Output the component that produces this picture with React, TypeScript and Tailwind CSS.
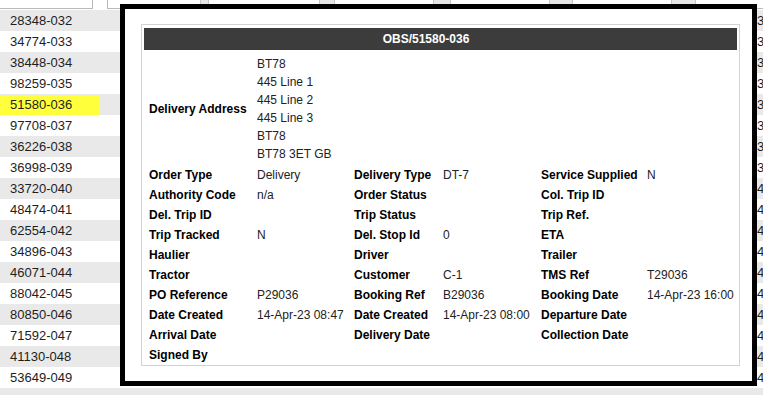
import React from "react"

const ids = [
  "28348-032", "34774-033", "38448-034", "98259-035", "51580-036", "97708-037",
  "36226-038", "36998-039", "33720-040", "48474-041", "62554-042", "34896-043",
  "46071-044", "88042-045", "80850-046", "71592-047", "41130-048", "53649-049",
  "",
]

const rows: [string, string, string, string, string, string][] = [
  ["Order Type", "Delivery", "Delivery Type", "DT-7", "Service Supplied", "N"],
  ["Authority Code", "n/a", "Order Status", "", "Col. Trip ID", ""],
  ["Del. Trip ID", "", "Trip Status", "", "Trip Ref.", ""],
  ["Trip Tracked", "N", "Del. Stop Id", "0", "ETA", ""],
  ["Haulier", "", "Driver", "", "Trailer", ""],
  ["Tractor", "", "Customer", "C-1", "TMS Ref", "T29036"],
  ["PO Reference", "P29036", "Booking Ref", "B29036", "Booking Date", "14-Apr-23 16:00"],
  ["Date Created", "14-Apr-23 08:47", "Date Created", "14-Apr-23 08:00", "Departure Date", ""],
  ["Arrival Date", "", "Delivery Date", "", "Collection Date", ""],
  ["Signed By", "", "", "", "", ""],
]

const address = ["BT78", "445 Line 1", "445 Line 2", "445 Line 3", "BT78", "BT78 3ET GB"]

const cols = "grid grid-cols-[108px_97px_89px_98px_106px_1fr]"

export default function App() {
  return (
    <div className="relative w-[763px] h-[395px] overflow-hidden bg-white font-['Liberation_Sans',Arial,sans-serif]">
      {/* filter strip */}
      <div className="flex h-[10px] overflow-hidden">
        <div className="w-[93px] h-[9px] border-r border-b border-[#b9b9b9]" />
        <div className="w-[14px]" />
        <div className="flex-1 h-[9px] border-l border-b border-[#b9b9b9] flex">
          <div className="w-[92px]" />
          <div className="w-[9px] bg-[#e6e6e6] border-x border-[#c4c4c4]" />
          <div className="w-[110px]" />
          <div className="w-[16px] bg-[#e6e6e6] border-x border-[#c4c4c4]" />
          <div className="w-[98px]" />
          <div className="w-[18px] bg-[#e6e6e6] border-x border-[#c4c4c4]" />
          <div className="w-[98px]" />
          <div className="w-[24px] bg-[#e6e6e6] border-x border-[#c4c4c4]" />
          <div className="w-[98px]" />
          <div className="w-[25px] bg-[#e6e6e6] border-x border-[#c4c4c4]" />
        </div>
      </div>

      {/* grid behind */}
      <div className="flex flex-col">
        {ids.map((id, i) => (
          <div
            key={i}
            className={`flex h-[21px] items-center text-[13px] text-[#1e1e1e] pt-[1px] ${i % 2 === 0 ? "bg-[#e9e9e9]" : "bg-white"}`}
          >
            <div className={`w-[100px] shrink-0 h-full flex items-center pl-[10px] ${id === "51580-036" ? "bg-[#ffff3c]" : ""}`}>
              {id}
            </div>
            <div className="w-[657px] shrink-0" />
            <div className="shrink-0 whitespace-nowrap">{id ? id.slice(-2) : ""}</div>
          </div>
        ))}
      </div>

      {/* popup */}
      <div className="absolute left-[120px] top-[4px] w-[637px] h-[382px] border-[5px] border-black bg-white pt-[15px] pl-[16px] pr-[12px]">
        <div className="h-[342px] border border-[#d3d3d3] pt-[3px] px-[2px] text-[12px]">
          <div className="h-[22px] bg-[#3c3c3c] text-white font-bold flex items-center justify-center pr-[29px]">
            OBS/51580-036
          </div>
          <div className="pl-[5px] pt-[5px]">
            <div className={cols}>
              <div className="font-bold text-black flex items-center">Delivery Address</div>
              <div className="col-span-5 text-[#222]">
                {address.map((a, i) => (
                  <div key={i} className="leading-[18px]">{a}</div>
                ))}
              </div>
            </div>
            <div className="pt-[2px]">
              {rows.map((r, i) => (
                <div key={i} className={`${cols} leading-[20px] whitespace-nowrap`}>
                  <div className="font-bold text-black">{r[0]}</div>
                  <div className="text-[#222]">{r[1]}</div>
                  <div className="font-bold text-black">{r[2]}</div>
                  <div className="text-[#222]">{r[3]}</div>
                  <div className="font-bold text-black">{r[4]}</div>
                  <div className="text-[#222]">{r[5]}</div>
                </div>
              ))}
            </div>
          </div>
        </div>
      </div>
    </div>
  )
}
